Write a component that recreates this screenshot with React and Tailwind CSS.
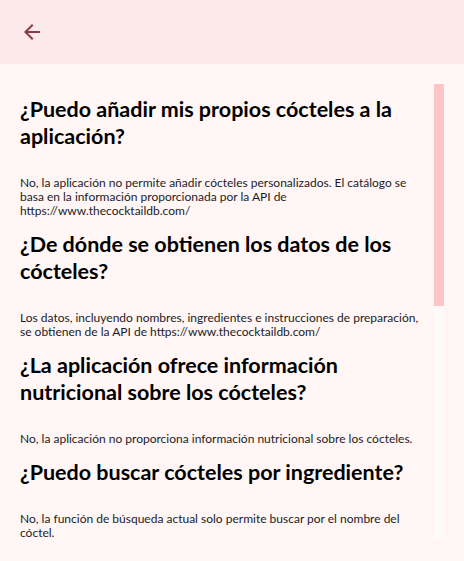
import React from "react";

const faqs = [
  {
    question: "¿Puedo añadir mis propios cócteles a la aplicación?",
    answer:
      "No, la aplicación no permite añadir cócteles personalizados. El catálogo se basa en la información proporcionada por la API de https://www.thecocktaildb.com/",
  },
  {
    question: "¿De dónde se obtienen los datos de los cócteles?",
    answer:
      "Los datos, incluyendo nombres, ingredientes e instrucciones de preparación, se obtienen de la API de https://www.thecocktaildb.com/",
  },
  {
    question: "¿La aplicación ofrece información nutricional sobre los cócteles?",
    answer: "No, la aplicación no proporciona información nutricional sobre los cócteles.",
  },
  {
    question: "¿Puedo buscar cócteles por ingrediente?",
    answer: "No, la función de búsqueda actual solo permite buscar por el nombre del cóctel.",
  },
];

const FaqItem = ({ question, answer }) => (
  <div className="flex flex-col">
    <h2 className="pr-6 text-[21.5px] leading-[27px] font-bold text-black">{question}</h2>
    <p className="mt-[26px] pr-2 text-[12px] leading-[14px] text-[#1c1b1f]">{answer}</p>
  </div>
);

const App = () => {
  return (
    <div className="w-[464px] h-[561px] flex flex-col bg-[#fff6f5] overflow-hidden" style={{ fontFamily: "Lato, 'Noto Sans', sans-serif" }}>
      <header className="h-16 shrink-0 flex items-center px-5 bg-[#fce9e9]">
        <button className="w-6 h-6 flex items-center justify-center text-[#8b3a44]">
          <svg width="24" height="24" viewBox="0 0 24 24" fill="currentColor">
            <path d="M20 11H7.83l5.59-5.59L12 4l-8 8 8 8 1.41-1.41L7.83 13H20v-2z" />
          </svg>
        </button>
      </header>

      <div className="flex mt-5 mx-5 h-[456px]">
        <div className="flex-1 overflow-hidden pt-3 flex flex-col gap-[13px]">
          {faqs.map((faq, idx) => (
            <FaqItem key={idx} question={faq.question} answer={faq.answer} />
          ))}
        </div>
        <div className="w-[10px] h-full bg-[#fffafa] flex flex-col">
          <div className="h-[222px] bg-[#ffc5c5]" />
        </div>
      </div>
    </div>
  );
};

export default App;
